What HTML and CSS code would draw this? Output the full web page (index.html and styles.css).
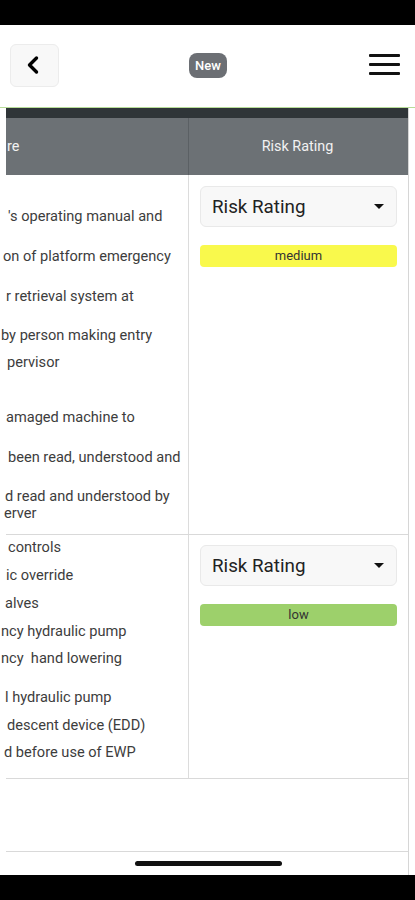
FILE: index.html
```html
<!DOCTYPE html>
<html lang="en">
<head>
<meta charset="utf-8">
<title>Risk Rating</title>
<link rel="stylesheet" href="styles.css">
</head>
<body>
<div class="statusbar"></div>
<header class="topbar">
  <div class="tb-left">
    <button class="back-btn" aria-label="Back">
      <svg width="16" height="20" viewBox="0 0 16 20"><path d="M11.5 3 L4.5 10 L11.5 17" fill="none" stroke="#000" stroke-width="3.4" stroke-linecap="round" stroke-linejoin="round"/></svg>
    </button>
  </div>
  <span class="new-badge">New</span>
  <div class="tb-right">
    <div class="burger"><span></span><span></span><span></span></div>
  </div>
</header>
<main class="sheet">
  <div class="darkbar"></div>
  <div class="thead">
    <div class="th th-left"><span class="x-cut">re</span></div>
    <div class="th th-right">Risk Rating</div>
  </div>
  <div class="row row1">
    <div class="cell-text">
      <div class="ln x8">'s operating manual and</div>
      <div class="ln x3">on of platform emergency</div>
      <div class="ln x6">r retrieval system at</div>
      <div class="ln x1 g39">by person making entry</div>
      <div class="ln x7 g27">pervisor</div>
      <div class="ln x6 g55">amaged machine to</div>
      <div class="ln x8">been read, understood and</div>
      <div class="ln x5 g39">d read and understood by</div>
      <div class="ln x4 g17">erver</div>
    </div>
    <div class="cell-rating">
      <div class="select"><span>Risk Rating</span><i class="caret"></i></div>
      <div class="pill medium">medium</div>
    </div>
  </div>
  <div class="row row2">
    <div class="cell-text">
      <div class="ln x8 first">controls</div>
      <div class="ln x6 g28">ic override</div>
      <div class="ln x5 g28">alves</div>
      <div class="ln x1 g28">ncy hydraulic pump</div>
      <div class="ln x1 g27">ncy&nbsp; hand lowering</div>
      <div class="ln x5 g39">l hydraulic pump</div>
      <div class="ln x7 g28">descent device (EDD)</div>
      <div class="ln x4 g27">d before use of EWP</div>
    </div>
    <div class="cell-rating">
      <div class="select"><span>Risk Rating</span><i class="caret"></i></div>
      <div class="pill low">low</div>
    </div>
  </div>
  <div class="spacer"></div>
  <div class="home"><div class="home-indicator"></div></div>
</main>
<div class="bottombar"></div>
</body>
</html>
```
FILE: styles.css
```css
* { box-sizing: border-box; }
html, body { margin: 0; padding: 0; background: #fff; }
body {
  width: 415px;
  height: 900px;
  overflow: hidden;
  font-family: Roboto, "Liberation Sans", Arial, sans-serif;
  color: #333;
}
.statusbar { height: 25px; background: #000; }
.topbar {
  height: 83px;
  display: grid;
  grid-template-columns: 1fr auto 1fr;
  align-items: center;
  padding: 0 15px 0 10px;
  border-bottom: 1px solid #b7dc98;
}
.tb-left { display: flex; }
.tb-right { display: flex; justify-content: flex-end; }
.back-btn {
  width: 49px;
  height: 43px;
  margin-top: -2px;
  background: #f8f8f8;
  border: 1px solid #ececec;
  border-radius: 6px;
  display: flex;
  align-items: center;
  justify-content: center;
  padding: 0 4px 0 0;
}
.new-badge {
  display: inline-block;
  background: #6c6f74;
  color: #fff;
  font-size: 13px;
  font-weight: 500;
  line-height: 25px;
  height: 25px;
  padding: 0 6px;
  border-radius: 8px;
  margin: -2px 0 0 6px;
}
.burger {
  width: 31px;
  display: flex;
  flex-direction: column;
  gap: 6px;
  margin-top: -4px;
}
.burger span { display: block; height: 3px; background: #111; border-radius: 1px; }

.sheet {
  margin-left: 6px;
  width: 403px;
  height: 767px;
  border-right: 1px solid #d6d6d6;
  display: flex;
  flex-direction: column;
}
.darkbar { height: 10px; background: #2f3538; flex: none; }
.thead {
  height: 57px;
  flex: none;
  display: grid;
  grid-template-columns: 183px 1fr;
  background: #6c7175;
  color: #f2f2f2;
  font-size: 14.4px;
}
.th { display: flex; align-items: center; }
.th-left { border-right: 1px solid #5b6064; }
.th-right { justify-content: center; padding-right: 2px; }
.x-cut { margin-left: 1px; }

.row {
  display: grid;
  grid-template-columns: 183px 1fr;
  border-bottom: 1px solid #d9d9d9;
  flex: none;
}
.row1 { height: 360px; }
.row2 { height: 244px; }
.cell-text {
  border-right: 1px solid #dcdcdc;
  font-size: 14.6px;
  color: #3d3d3d;
  white-space: nowrap;
  overflow: visible;
}
.row1 .cell-text { padding-top: 31px; }
.row2 .cell-text { padding-top: 2px; }
.ln { line-height: 20px; height: 20px; margin-top: 20px; }
.row1 .ln:first-child, .ln.first { margin-top: 0; }
.ln.g39 { margin-top: 19px; }
.ln.g27 { margin-top: 7px; }
.ln.g28 { margin-top: 8px; }
.ln.g55 { margin-top: 35px; }
.ln.g17 { margin-top: -3px; }
.x1 { margin-left: -5px; }
.x3 { margin-left: -3px; }
.x4 { margin-left: -2px; }
.x5 { margin-left: -1px; }
.x6 { margin-left: 0; }
.x7 { margin-left: 1px; }
.x8 { margin-left: 2px; }

.cell-rating { padding: 11px 11px 0 11px; }
.row2 .cell-rating { padding-top: 10px; }
.select {
  height: 41px;
  background: #f8f8f8;
  border: 1px solid #e9e9e9;
  border-radius: 6px;
  display: flex;
  align-items: center;
  justify-content: space-between;
  padding: 0 12px 0 11px;
  font-size: 18.8px;
  color: #222;
}
.caret {
  width: 0;
  height: 0;
  border-left: 5px solid transparent;
  border-right: 5px solid transparent;
  border-top: 5px solid #111;
}
.pill {
  margin-top: 18px;
  height: 22px;
  border-radius: 4px;
  text-align: center;
  font-size: 13px;
  line-height: 22px;
  color: #333;
}
.medium { background: #f9f94c; }
.low { background: #9dd06b; }

.spacer { height: 73px; border-bottom: 1px solid #d9d9d9; flex: none; }
.home { flex: 1; display: flex; justify-content: center; padding-top: 9px; padding-left: 2px; }
.home-indicator { width: 147px; height: 5px; background: #111; border-radius: 3px; }
.bottombar { height: 25px; background: #000; }
```
